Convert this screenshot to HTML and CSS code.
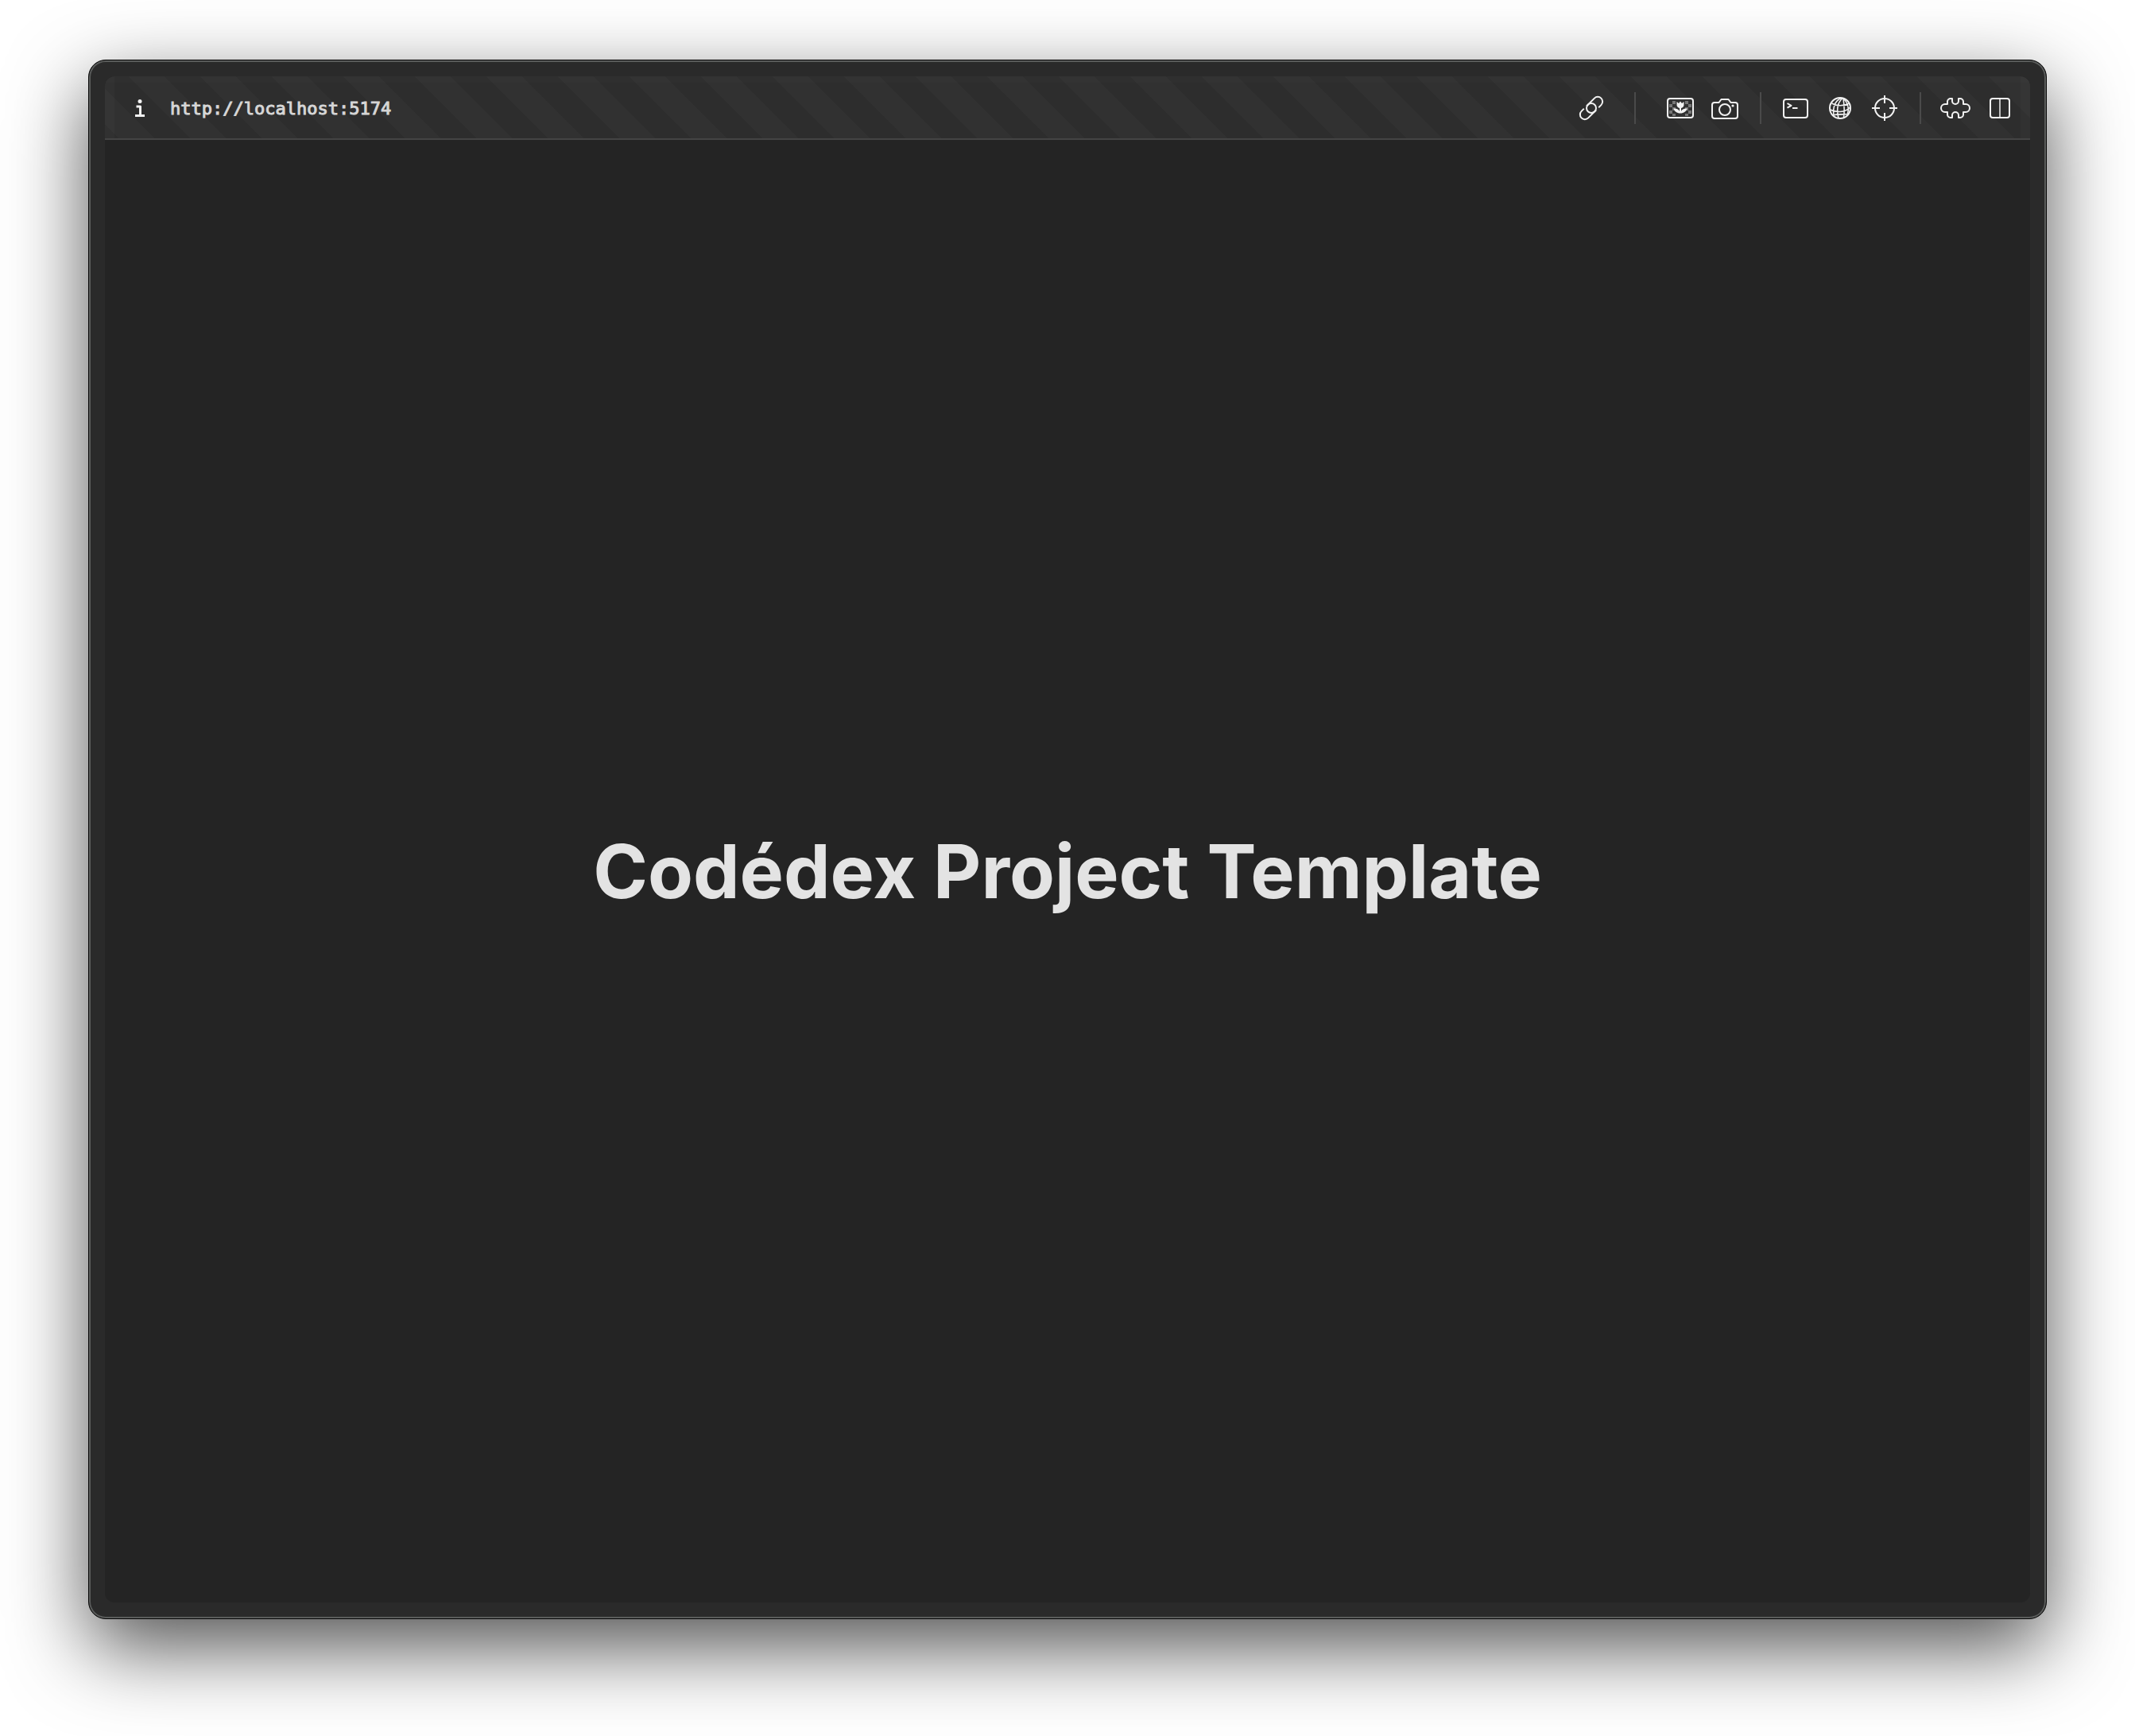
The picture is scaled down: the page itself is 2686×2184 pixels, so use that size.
FILE: index.html
```html
<!DOCTYPE html>
<html lang="en">
<head>
<meta charset="utf-8">
<title>Codédex Project Template</title>
<link rel="stylesheet" href="styles.css">
</head>
<body>
<div class="window">
  <div class="viewport">
    <header class="toolbar">
      <button class="tool" type="button" aria-label="Site information">
        <svg width="12" height="22" viewBox="0 0 12 22"><circle cx="6" cy="2.500" r="2.500" fill="currentColor" stroke="none"/><path d="M1.500 9H6.500V20M0 20.500h12" stroke-width="3"/></svg>
      </button>
      <a class="address" href="http://localhost:5174">http://localhost:5174</a>
      <div class="tools">
        <div class="group group-link">
          <button class="tool" type="button" aria-label="Copy link">
            <svg width="40" height="40" viewBox="0 0 40 40"><g transform="rotate(-45 20 20)"><path d="M12 14H8.500a6 6 0 0 0 0 12H20a6 6 0 0 0 0-12H17.500M12 14h1"/><path d="M28 26h3.500a6 6 0 0 0 0-12H20a6 6 0 0 0 0 12H22.500M28 26h-1"/></g></svg>
          </button>
        </div>
        <div class="group">
          <button class="tool" type="button" aria-label="Image">
            <svg width="40" height="40" viewBox="0 0 40 40"><rect x="4" y="8" width="32" height="24" rx="3"/><path d="M10 11h4v4h-4zM6 15h4v4H6zM10 19h4v4h-4zM6 23h4v4H6zM10 27h4v3h-4zM26 11h4v4h-4zM30 15h4v4h-4zM26 19h4v4h-4zM30 23h4v4h-4zM26 27h4v3h-4z" fill="#777" stroke="none"/><path d="M15.500 12l2.500 2 2-2.500 2 2.500 2.500-2v4c0 2-1.500 3.500-3.500 4v4c1-2.500 4-4 7.500-3.500-1 3.500-4 6-8.500 6s-7.500-2.500-8.500-6c3.500-.5 6.500 1 7.500 3.500v-4c-2-.5-3.500-2-3.500-4z" fill="currentColor" stroke="none"/></svg>
          </button>
          <button class="tool" type="button" aria-label="Screenshot">
            <svg width="40" height="40" viewBox="0 0 40 40"><path d="M4 16a3 3 0 0 1 3-3h5.500l3-4h9l3 4H33a3 3 0 0 1 3 3V30a3 3 0 0 1-3 3H7a3 3 0 0 1-3-3z"/><circle cx="20" cy="22" r="7"/><circle cx="30" cy="17" r="1.600" fill="currentColor" stroke="none"/></svg>
          </button>
        </div>
        <div class="group">
          <button class="tool" type="button" aria-label="Console">
            <svg width="40" height="40" viewBox="0 0 40 40"><rect x="5" y="9" width="30" height="23" rx="3"/><path d="M9.500 14l5 2.800-5 2.800M16 20H22.500"/></svg>
          </button>
          <button class="tool" type="button" aria-label="Network">
            <svg width="40" height="40" viewBox="0 0 40 40"><circle cx="20" cy="20" r="13"/><path d="M21 7.500C14 11 10.500 18 12 29.500M23 7.500C17 13 15 21 18 32.500M24 8C25 15 26 23 24.500 32M24 8C29 12 31.500 19 29.500 28M9.500 14C15 17.500 24 18 31.500 14M7.500 22C15 25.500 26 26 32.500 19M11.500 29C17 27 23 28.500 29.500 27.500" stroke-width="1.600"/></svg>
          </button>
          <button class="tool" type="button" aria-label="Inspect element">
            <svg width="40" height="40" viewBox="0 0 40 40"><circle cx="20" cy="20" r="12"/><path d="M20 4v10M20 26v10M4 20h10M26 20h10"/></svg>
          </button>
        </div>
        <div class="group">
          <button class="tool" type="button" aria-label="Extensions">
            <svg width="40" height="40" viewBox="0 0 40 40"><path d="M10 14.500V12a4 4 0 0 1 4-4h2v3a4 4 0 0 0 8 0V8h2a4 4 0 0 1 4 4v3h3a5 5 0 0 1 0 10h-3v3a4 4 0 0 1-4 4h-2v-3a4 4 0 0 0-8 0v3h-2a4 4 0 0 1-4-4v-3H7a5 5 0 0 1 0-10h3z"/></svg>
          </button>
          <button class="tool" type="button" aria-label="Split view">
            <svg width="40" height="40" viewBox="0 0 40 40"><rect x="8" y="8" width="24" height="24" rx="3"/><path d="M20 8v24" stroke-width="1.500"/></svg>
          </button>
        </div>
      </div>
    </header>
    <main class="page">
      <h1 class="title">Codédex Project Template</h1>
    </main>
  </div>
</div>
</body>
</html>
```
FILE: styles.css
```css
* {
  box-sizing: border-box;
}

body {
  margin: 0;
  min-height: 100vh;
  display: flex;
  padding: 75px 111px 147px;
  background: #fff;
  font-family: Inter, "Liberation Sans", sans-serif;
}

.window {
  flex: 1;
  display: flex;
  padding: 20px;
  border: 1px solid #050505;
  border-radius: 22px;
  background: #2a2a2a;
  box-shadow:
    inset 0 0 0 2px #5a5c5b,
    0 36px 100px rgba(0, 0, 0, 0.68);
}

.viewport {
  flex: 1;
  display: flex;
  flex-direction: column;
  overflow: hidden;
  border-radius: 12px;
  background: #242424;
}

.toolbar {
  display: flex;
  align-items: center;
  height: 80px;
  padding: 2px 18px 0 38px;
  border-bottom: 2px solid #444;
  background: linear-gradient(45deg, #313131 25%, #2d2d2d 25% 50%, #313131 50% 75%, #2d2d2d 75%) 30px 0 / 90px 90px;
  box-shadow:
    inset 12px 0 rgba(255, 255, 255, 0.02),
    inset -12px 0 rgba(255, 255, 255, 0.02),
    inset 0 8px rgba(255, 255, 255, 0.01);
}

.tool {
  display: flex;
  padding: 0;
  border: 0;
  background: none;
  color: #f2f2f2;
}

.tool svg {
  fill: none;
  stroke: currentColor;
  stroke-width: 2;
  stroke-linejoin: round;
}

.address {
  margin-left: 32px;
  color: #d6d6d6;
  font-family: "DejaVu Sans Mono", monospace;
  font-size: 22px;
  text-decoration: none;
  -webkit-text-stroke: 1px;
}

.tools {
  display: flex;
  margin-left: auto;
}

.group {
  display: flex;
  align-items: center;
  gap: 16px;
}

.group + .group::before {
  content: "";
  width: 2px;
  height: 40px;
  margin: 0 7px 0 24px;
  background: #4a4a4a;
}

.group-link + .group::before {
  margin: 0 20px 0 34px;
}

.page {
  flex: 1;
  display: grid;
  place-items: center;
  color: #e3e3e3;
}

.title {
  margin: 0;
  font-size: 93px;
  font-weight: 700;
  line-height: 1.1;
  text-align: center;
}
```
